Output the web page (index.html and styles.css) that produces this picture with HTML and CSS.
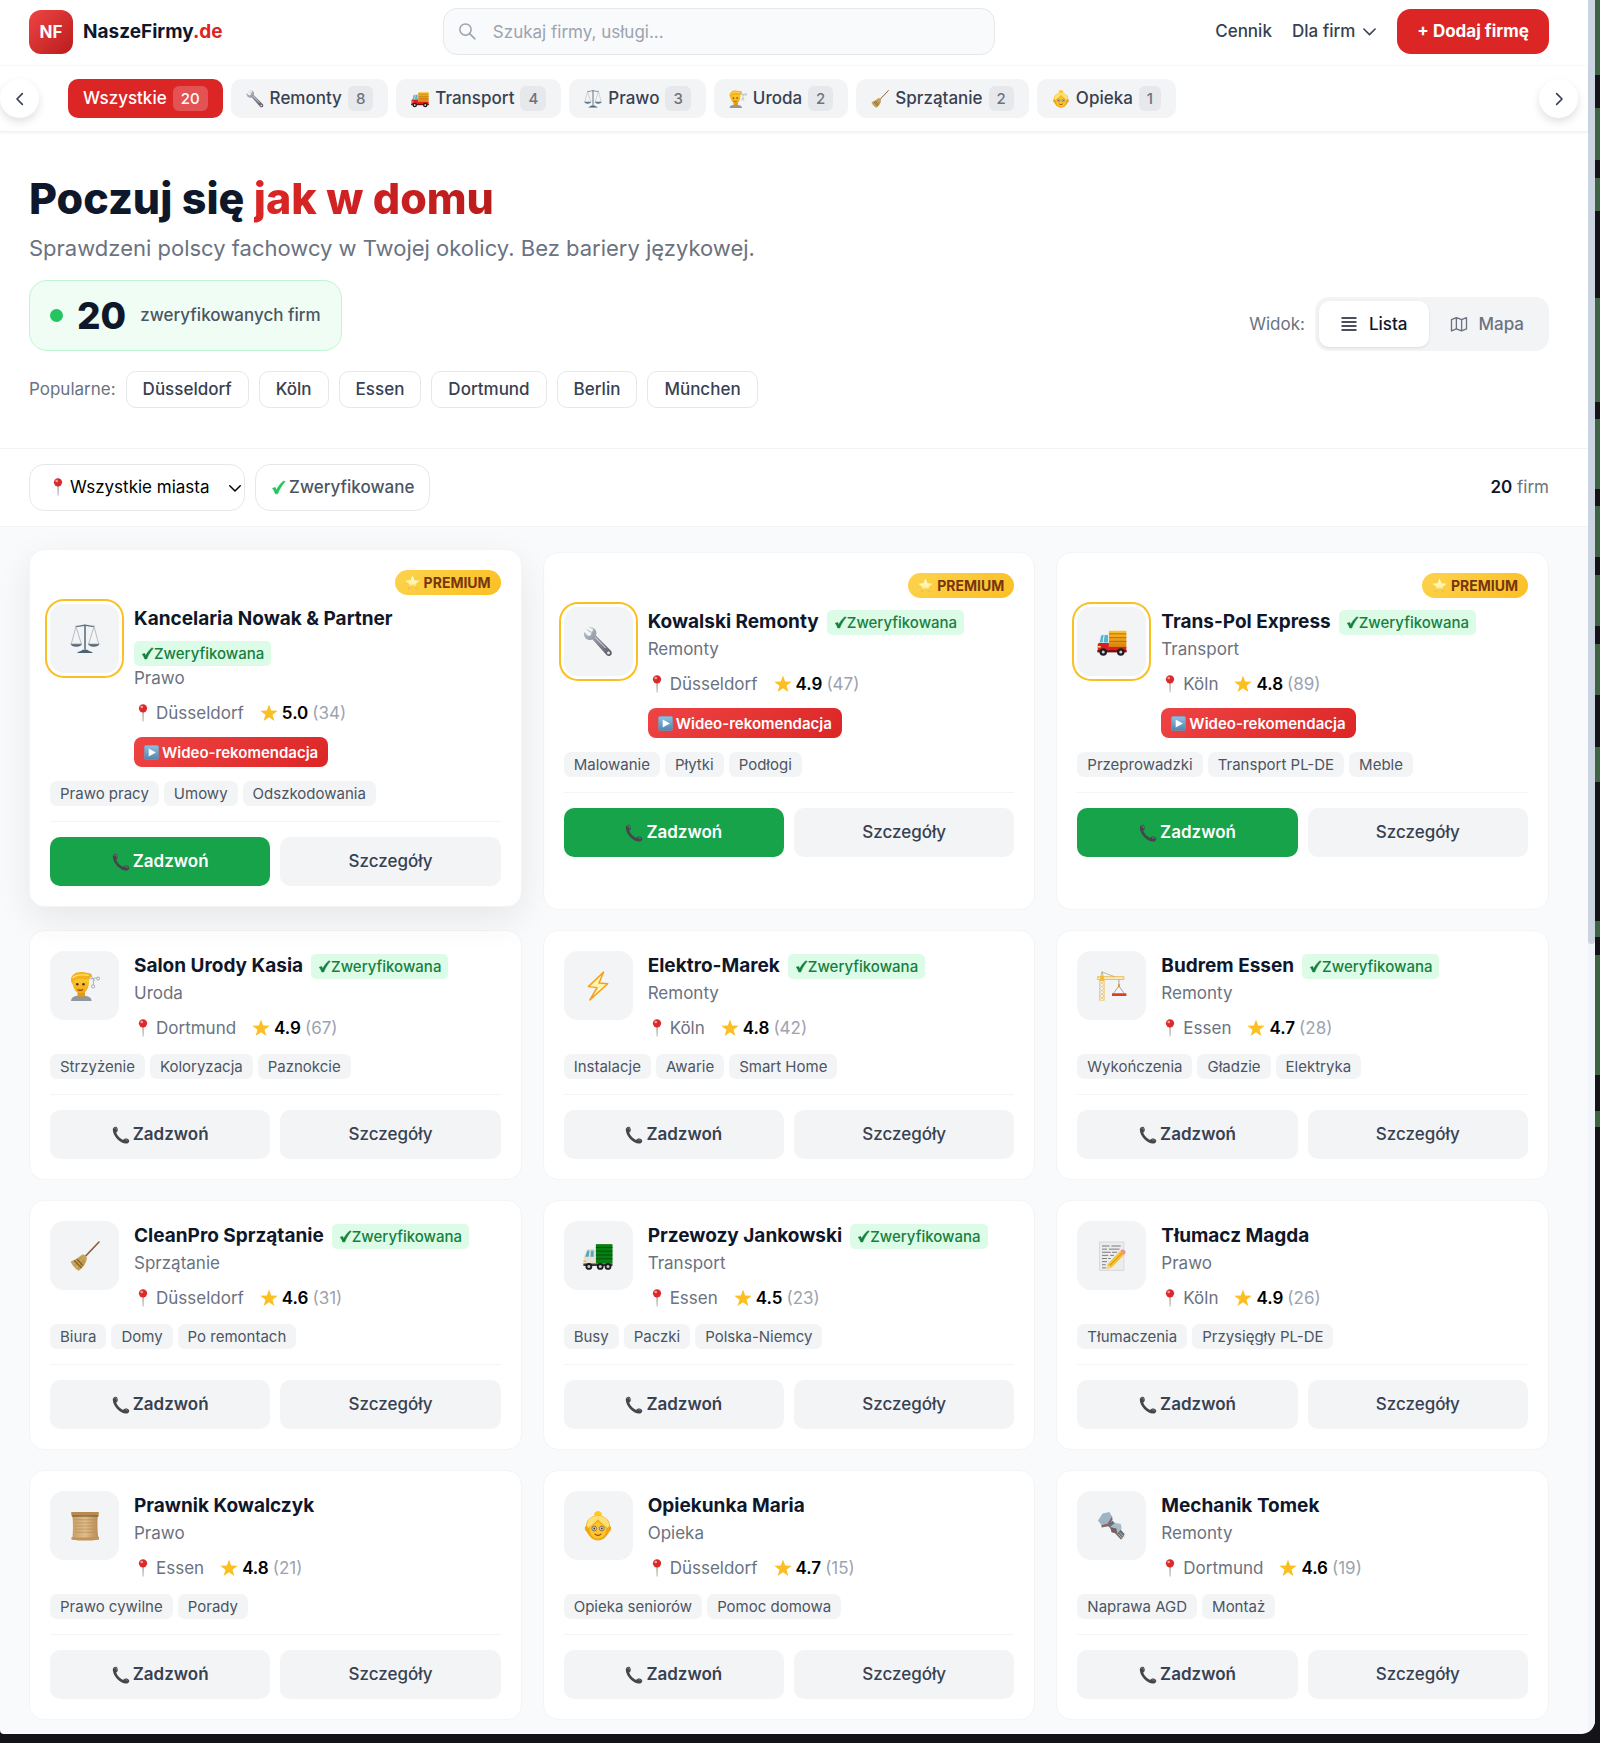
FILE: index.html
```html
<!DOCTYPE html>
<html lang="pl">
<head>
    <meta charset="UTF-8">
    <meta name="viewport" content="width=device-width, initial-scale=1.0">
    <title>NaszeFirmy.de</title>
    <link rel="stylesheet" href="styles.css">
</head>
<body>
    <!-- Icon sprite -->
    <svg class="sprite" aria-hidden="true">
        <defs>
            <linearGradient id="g-steel" x1="0" y1="0" x2="1" y2="1">
                <stop offset="0" stop-color="#b9c6cf"/>
                <stop offset="1" stop-color="#5b5560"/>
            </linearGradient>
            <linearGradient id="g-cargo" x1="0" y1="0" x2="0" y2="1">
                <stop offset="0" stop-color="#ffc02e"/>
                <stop offset="1" stop-color="#d97f06"/>
            </linearGradient>
            <linearGradient id="g-face" x1="0" y1="0" x2="0" y2="1">
                <stop offset="0" stop-color="#ffd83b"/>
                <stop offset="1" stop-color="#f2a516"/>
            </linearGradient>
            <linearGradient id="g-paper" x1="0" y1="0" x2="1" y2="0">
                <stop offset="0" stop-color="#c99e66"/>
                <stop offset=".5" stop-color="#dfbc8a"/>
                <stop offset="1" stop-color="#b98c54"/>
            </linearGradient>
            <linearGradient id="g-play" x1="0" y1="0" x2="0" y2="1">
                <stop offset="0" stop-color="#8fc0e4"/>
                <stop offset="1" stop-color="#4f84ae"/>
            </linearGradient>
            <linearGradient id="g-star" x1="0" y1="0" x2="0" y2="1">
                <stop offset="0" stop-color="#fffbe0"/>
                <stop offset=".6" stop-color="#fff3a0"/>
                <stop offset="1" stop-color="#f0a818"/>
            </linearGradient>
        </defs>
        <symbol id="i-wrench" viewBox="0 0 24 24">
            <path d="M2 1.2 5.6 4.4 7.6 3.6 8 1.3 4.6.6C7.2-.4 10.4 1.2 10.7 4.2c.1 1-.1 1.8-.4 2.5l11.9 12.1c1.1 1.1 1.1 2.7.1 3.7-1 .9-2.5.9-3.5-.2L7.600 10C4.700 11.200 1.300 9.300.800 6.300.600 5.500.700 4.600 1 3.900l3.100 3.200 2.200-.5L6.800 4z" fill="url(#g-steel)"/>
            <circle cx="20.4" cy="20.7" r="1.1" fill="#eee"/>
            <path d="M9.700 8.300 18 16.800" stroke="#dfe5e9" stroke-width=".8"/>
        </symbol>
        <symbol id="i-truck" viewBox="0 0 24 24">
            <path d="M9.500 3h14v13.500h-14z" fill="url(#g-cargo)"/>
            <path d="M9.500 5.500h14M9.500 8.500h14M9.500 11.500h14" stroke="#a9690c" stroke-width=".7"/>
            <path d="M1 15.500 2.600 7c.2-1 1-1.500 2-1.500h4.900v10z" fill="#e9eef0"/>
            <path d="M2.200 12.300 3.200 7.600c.2-.8.700-1.200 1.500-1.200h.6l-.9 5.900zM5.300 12.300l.8-5.900H8.800v5.900z" fill="#55b4d2"/>
            <path d="M.6 14.200c0-1 .6-1.500 1.500-1.500h7.400v3.300h14v4H.6z" fill="#db1e1e"/>
            <path d="M.3 18.500h23.300v1.800H.3z" fill="#7b0d0d"/>
            <circle cx="5" cy="20" r="3" fill="#1f1f23"/>
            <circle cx="19" cy="20" r="3" fill="#1f1f23"/>
            <circle cx="5" cy="20" r="1.2" fill="#ccd"/>
            <circle cx="19" cy="20" r="1.2" fill="#ccd"/>
            <path d="M.8 15.200h2.200v1.200H.8z" fill="#ffe27a"/>
        </symbol>
        <symbol id="i-lorry" viewBox="0 0 24 24">
            <path d="M10.300 2.500h13.300v15.500H10.300z" fill="#087f12"/>
            <path d="M10.300 5.200h13.300M10.300 8.200h13.300M10.300 11.200h13.300M10.300 14.200h13.300" stroke="#04530b" stroke-width=".8"/>
            <path d="M.6 19V13L2.600 7.500c.3-.8.900-1.200 1.800-1.200h5.200V19z" fill="#e8e1cf"/>
            <path d="M1.700 12.500 3.500 7.600h1.700l-.6 4.900zM6 12.500l.3-5h2.200v5z" fill="#4ea9cb"/>
            <path d="M.3 18h23.300v2H.3z" fill="#3a3a3d"/>
            <circle cx="4.7" cy="20.3" r="2.7" fill="#1c1c1f"/>
            <circle cx="13.8" cy="20.3" r="2.7" fill="#1c1c1f"/>
            <circle cx="20" cy="20.3" r="2.7" fill="#1c1c1f"/>
            <circle cx="4.7" cy="20.3" r="1.2" fill="#cbc7bb"/>
            <circle cx="13.8" cy="20.3" r="1.2" fill="#cbc7bb"/>
            <circle cx="20" cy="20.3" r="1.2" fill="#cbc7bb"/>
            <path d="M.4 15.500h2v1.200h-2z" fill="#f5b63c"/>
        </symbol>
        <symbol id="i-scales" viewBox="0 0 24 24">
            <path d="M4.500 1.800C8 2.400 10 .9 12 .9s4 1.500 7.500.9" fill="none" stroke="#5b7184" stroke-width="1"/>
            <path d="M12 .5v20" stroke="#54697b" stroke-width="1.2"/>
            <path d="M4.800 2 1 16M4.800 2l4.300 14M19.200 2 14.900 16M19.200 2 23 16" fill="none" stroke="#a5a8ab" stroke-width=".6"/>
            <path d="M.3 15.800h9.400c-.6 1.700-2.300 2.400-4.700 2.400s-4.100-.7-4.700-2.400zM14.300 15.800h9.400c-.6 1.700-2.300 2.400-4.700 2.400s-4.100-.7-4.700-2.400z" fill="#53697c"/>
            <path d="M1 15.800h8M15 15.800h8" stroke="#cbd5dc" stroke-width=".6"/>
            <path d="M5.800 23.200c.3-1.300 3-1 4.200-2.600h4c1.200 1.600 3.900 1.300 4.200 2.600z" fill="#4d6375"/>
        </symbol>
        <symbol id="i-haircut" viewBox="0 0 24 24">
            <path d="M.8 24c0-3.500 3-4.500 8-4.500s8.500 1.200 8.500 4.500z" fill="#93979b"/>
            <path d="M6 16h6v3.500c-1 1.500-5 1.500-6 0z" fill="#e29a12"/>
            <path d="M1.800 7c0-3 3-5 7-5s6.500 2.500 6.500 6c0 5-2.200 10-6.500 10s-7-5-7-11z" fill="url(#g-face)"/>
            <path d="M.8 8C.300 3.500 4 .800 8.800.800c4 0 5.700 1.200 8.700 1.500-.2 3.200-2.700 4.700-6.200 4.500C8 6.600 4.500 6.400 2.600 8.800L2 11z" fill="#f5b21c"/>
            <path d="M2 5.500C5 2.500 9 2.500 15 3.500" stroke="#ffe56b" fill="none"/>
            <circle cx="5.8" cy="10.5" r="1" fill="#4d3316"/>
            <circle cx="10.8" cy="10.5" r="1" fill="#4d3316"/>
            <path d="M6 14.800c1.500.9 3 .9 4.500 0" stroke="#a3470f" fill="none"/>
            <path d="M15 1.500 20 8M14.500 6.500 21.500 5.500M18.500 6 18.800 11" stroke="#a6abb0" stroke-width=".7"/>
            <circle cx="22.5" cy="6" r="1.2" fill="none" stroke="#999ea4" stroke-width=".7"/>
            <circle cx="18.5" cy="12.3" r="1.3" fill="none" stroke="#999ea4" stroke-width=".7"/>
        </symbol>
        <symbol id="i-broom" viewBox="0 0 24 24">
            <path d="M23.200.8 12.500 12" stroke="#8a5a3a" stroke-width="1.3" stroke-linecap="round"/>
            <path d="M9.800 10.800c1.700-.5 4 1.500 3.700 3.500-.8 4-3.500 7.500-6.500 9.400C4 22 1.300 19 .6 16.300 4 15.500 7 13 9.800 10.800z" fill="#c9a55a"/>
            <path d="M5.500 14.500 10.500 19.700M3.300 15.500l5.900 6" stroke="#7c5423" stroke-width="1"/>
            <path d="M9 13 4 19.500M11 14.500 6.500 22M12 16 8 22" stroke="#a17c36" stroke-width=".5"/>
        </symbol>
        <symbol id="i-granny" viewBox="0 0 24 24">
            <path d="M12 0c1.500 0 3.200 1.200 3.200 2.800S13.800 5 12 5 8.800 4.400 8.800 2.800 10.500 0 12 0z" fill="#ffca28"/>
            <path d="M12 3.500C6 3.500 2.600 7.500 2.400 12c-1.400.6-1.200 3.800.5 4.500 2 3.800 5.100 7 9.100 7s7.100-3.200 9.100-7c1.700-.7 1.900-3.900.5-4.500-.2-4.500-3.600-8.500-9.600-8.500z" fill="#f0a515"/>
            <path d="M12 3.700C6.500 3.700 3 7.500 3 12l1.500 1.500C6 12 9 10 12 6.500c3 3.500 6 5.500 7.500 7L21 12c0-4.500-3.500-8.300-9-8.300z" fill="#ffe173"/>
            <path d="M12 8c-2.500 3-5 4-6.800 5.500C5.300 18.500 8 22 12 22s6.700-3.500 6.800-8.500C17 12 14.500 11 12 8z" fill="#ffc62b"/>
            <circle cx="9" cy="14" r="1.9" fill="#cfe2ec" stroke="#756451" stroke-width=".7"/>
            <circle cx="15" cy="14" r="1.9" fill="#cfe2ec" stroke="#756451" stroke-width=".7"/>
            <circle cx="9" cy="14" r=".8" fill="#4d3316"/>
            <circle cx="15" cy="14" r=".8" fill="#4d3316"/>
            <path d="M9.300 18.300c1.700 1.500 3.700 1.500 5.400 0" stroke="#9c4310" fill="none"/>
        </symbol>
        <symbol id="i-pin" viewBox="0 0 24 24">
            <path d="M11.300 9h1.500l-.3 14.300h-.8z" fill="#8d8378"/>
            <circle cx="12" cy="5.8" r="5.5" fill="#dc2a2a"/>
            <circle cx="10.3" cy="4" r="1.8" fill="#f59b95"/>
        </symbol>
        <symbol id="i-star" viewBox="0 0 24 24">
            <path d="M12 .5l2.900 8.200 8.700.2-6.900 5.300 2.500 8.400L12 17.600l-7.200 5 2.500-8.400L.400 8.900l8.700-.2z" fill="#fbbf24"/>
        </symbol>
        <symbol id="i-glow-star" viewBox="0 0 24 24">
            <path d="M12 .8l3.300 7.700 8.200.6-6.300 5.400 2 8.300-7.200-4.400-7.200 4.400 2-8.300L.500 9.100l8.200-.6z" fill="url(#g-star)"/>
        </symbol>
        <symbol id="i-play" viewBox="0 0 24 24">
            <rect x=".5" y=".5" width="23" height="23" rx="3" fill="url(#g-play)" stroke="#7c98ad"/>
            <path d="M7.500 5.500v13L19 12z" fill="#fff"/>
        </symbol>
        <symbol id="i-phone" viewBox="0 0 24 24">
            <path d="M1.200 3.500C2 1.500 4.500.300 6 1.300c1.600 1.200 2.100 4.200 1.300 5.700-.6 1-1.700 1-1.500 2 .7 3.500 5.200 8 8.700 9.200 1 .3 1.500-.9 2.500-1.300 2-.7 5 .3 5.800 2 .8 1.800-.8 4-2.900 4.400C11.500 24.700-.300 12 1.200 3.500z" fill="#45454a"/>
            <path d="M3 3.500c.7-1 2-1.300 2.600-.6.7.8.900 2 .6 2.900M17.500 18.500c1.500-.4 3.200.2 3.700 1.200" fill="none" stroke="#8b8b91" stroke-width="1"/>
        </symbol>
        <symbol id="i-bolt" viewBox="0 0 24 24">
            <path d="M16.500.8 4.300 12.500l7 .8L5.500 23.200l14.300-13-7-.6z" fill="#fff4b0" stroke="#f59e1b" stroke-width="1.2" stroke-linejoin="round"/>
        </symbol>
        <symbol id="i-crane" viewBox="0 0 24 24">
            <path d="M2 7h3.800v16.500H2z" fill="none" stroke="#efcd7d" stroke-width=".7"/>
            <path d="M2 8l3.800 3L2 14l3.800 3L2 20l3.800 3M5.800 8 2 11l3.800 3L2 17l3.800 3L2 23" fill="none" stroke="#e9bd5a" stroke-width=".6"/>
            <path d="M.5 4.500h21v2.300H.5z" fill="#f9e8bc" stroke="#e7b03a" stroke-width=".6"/>
            <path d="M3 4.500 4 .5l1 4M4 .8 14 4.500" fill="none" stroke="#b3a27c" stroke-width=".6"/>
            <path d="M2.500 4h3v4h-3z" fill="#f2b93b"/>
            <path d="M17.500 7v5l-4 5.500m4-5.500 4 5.500" fill="none" stroke="#868a8e" stroke-width=".6"/>
            <path d="M16.800 10.500h1.500v2.500h-1.500z" fill="#d29b2c"/>
            <path d="M12 17.800h11.500v2.200H12z" fill="#d9401f"/>
        </symbol>
        <symbol id="i-memo" viewBox="0 0 24 24">
            <path d="M2 .8h19.500v22.700H2z" fill="#ececec" stroke="#d2d2d2" stroke-width=".6"/>
            <path d="M4 4h6m1.500 0H19M4 6.500h4m1.500 0H18M4 9h7m1 0h4M4 11.500h5m1.500 0h3M4 14h4m1 0h2M4 16.500h4M4 19h3M4 21.500h3" stroke="#7b7b7b" stroke-width=".8"/>
            <path d="M8.500 18.500 18.500 8l3.200 3L11.500 21.300l-4.200 1.200z" fill="#f8c22a"/>
            <path d="M10 19.800 20.300 9.500" stroke="#c98a10" stroke-width=".8"/>
            <path d="M18.500 8c1-1.200 2.200-1.700 3.500-.7 1.200 1.100 1 2.600-.3 3.700z" fill="#ee8d92"/>
            <path d="m8.500 18.500-1.200 4 4.200-1.200z" fill="#ecd3a4"/>
        </symbol>
        <symbol id="i-scroll" viewBox="0 0 24 24">
            <path d="M1.800 2.500h20.500c-.5 6-.5 12.500.2 19H2c.5-7 .5-13-.2-19z" fill="url(#g-paper)"/>
            <path d="M4 7h16M4 9.500h16M4 12h16M4 14.500h16M4 17h16" stroke="#b08a58" stroke-width=".5"/>
            <path d="M1 .8h22v2.700H1z" fill="#b98a50"/>
            <path d="M1.500 3.500h21.300v1H1.500z" fill="#7d5a31"/>
            <path d="M1.200 20.800c8 .8 14 .3 22-.3v2.500c-8 .9-14 .9-22 0z" fill="#c1935a"/>
        </symbol>
        <symbol id="i-nut" viewBox="0 0 24 24">
            <path d="M.8 7.500 4.500 2l5.300-1.300L12 4.200 8.300 10 3.500 11.200z" fill="#9db4c4"/>
            <path d="M8.300 10 12 4.200l.5 2.300-3.200 5.700-5.600 1L3.500 11.200z" fill="#86686a"/>
            <path d="m8.500 11.500 3.800-4 9.900 11-2.900 4.500z" fill="#66717b"/>
            <path d="m10.500 12.800 4-3.500 4.500 1 .8 3.700-3.600 4-4.500-1z" fill="#a9bdc9"/>
            <path d="m10.500 12.800 5 1.200.7 4-4.500-1z" fill="#7a5d60"/>
            <path d="M18 17.500 22 21m-5-2.500 3.300 3.500" stroke="#c8a98a" stroke-width=".8"/>
        </symbol>
        <symbol id="i-check" viewBox="0 0 24 24">
            <path d="M2.500 13.300 6.800 12l2 4.500C11.500 10.500 15.500 5 20 1.800l2.500.7C17.500 8 13.500 14.500 10.500 22H7C6 18.500 4.500 15.800 2.500 13.300z" fill="currentColor" stroke="currentColor" stroke-width="1.2" stroke-linejoin="round"/>
        </symbol>
        <symbol id="i-search" viewBox="0 0 24 24">
            <circle cx="10" cy="10" r="7.5" fill="none" stroke="currentColor" stroke-width="2"/>
            <path d="m15.500 15.500 7 7" stroke="currentColor" stroke-width="2" stroke-linecap="round"/>
        </symbol>
        <symbol id="i-down" viewBox="0 0 24 24">
            <path d="m3 8 9 9 9-9" fill="none" stroke="currentColor" stroke-width="2.5" stroke-linecap="round" stroke-linejoin="round"/>
        </symbol>
        <symbol id="i-left" viewBox="0 0 24 24">
            <path d="m15.500 4-8 8 8 8" fill="none" stroke="currentColor" stroke-width="2.5" stroke-linecap="round" stroke-linejoin="round"/>
        </symbol>
        <symbol id="i-right" viewBox="0 0 24 24">
            <path d="m8.500 4 8 8-8 8" fill="none" stroke="currentColor" stroke-width="2.5" stroke-linecap="round" stroke-linejoin="round"/>
        </symbol>
        <symbol id="i-list" viewBox="0 0 24 24">
            <path d="M2 4h20M2 9.300h20M2 14.700h20M2 20h20" stroke="currentColor" stroke-width="2.2"/>
        </symbol>
        <symbol id="i-map" viewBox="0 0 24 24">
            <path d="M8.500 3.500 2 6.300v15l6.500-2.800 7 2.800 6.500-2.800v-15l-6.500 2.800zM8.500 3.500v15M15.500 6.300v15" fill="none" stroke="currentColor" stroke-width="1.8" stroke-linejoin="round"/>
        </symbol>
    </svg>

    <div class="window">
        <div class="page">
            <header class="header">
                <a class="logo" href="#">
                    <span class="logo-mark">NF</span>
                    <span class="logo-name">NaszeFirmy<span class="accent">.de</span></span>
                </a>
                <label class="search">
                    <svg class="icon-search"><use href="#i-search"/></svg>
                    <input type="search" placeholder="Szukaj firmy, usługi..." aria-label="Szukaj firmy, usługi">
                </label>
                <nav class="menu">
                    <a class="menu-link" href="#">Cennik</a>
                    <a class="menu-link" href="#">Dla firm <svg class="icon-menu"><use href="#i-down"/></svg></a>
                    <button class="add-button" type="button">+ Dodaj firmę</button>
                </nav>
            </header>

            <nav class="categories">
                <button class="arrow arrow-left" type="button" aria-label="Poprzednie"><svg><use href="#i-left"/></svg></button>
                <button class="category active" type="button">Wszystkie <span class="count">20</span></button>
                <button class="category" type="button"><svg><use href="#i-wrench"/></svg>Remonty <span class="count">8</span></button>
                <button class="category" type="button"><svg><use href="#i-truck"/></svg>Transport <span class="count">4</span></button>
                <button class="category" type="button"><svg><use href="#i-scales"/></svg>Prawo <span class="count">3</span></button>
                <button class="category" type="button"><svg><use href="#i-haircut"/></svg>Uroda <span class="count">2</span></button>
                <button class="category" type="button"><svg><use href="#i-broom"/></svg>Sprzątanie <span class="count">2</span></button>
                <button class="category" type="button"><svg><use href="#i-granny"/></svg>Opieka <span class="count">1</span></button>
                <button class="arrow arrow-right" type="button" aria-label="Następne"><svg><use href="#i-right"/></svg></button>
            </nav>

            <section class="hero">
                <h1>Poczuj się <span class="hero-accent">jak w domu</span></h1>
                <p class="subtitle">Sprawdzeni polscy fachowcy w Twojej okolicy. Bez bariery językowej.</p>
                <div class="hero-row">
                    <div class="stat">
                        <span class="dot"></span>
                        <strong>20</strong>
                        <span>zweryfikowanych firm</span>
                    </div>
                    <div class="view">
                        <span>Widok:</span>
                        <div class="toggle">
                            <button class="active" type="button"><svg><use href="#i-list"/></svg>Lista</button>
                            <button type="button"><svg><use href="#i-map"/></svg>Mapa</button>
                        </div>
                    </div>
                </div>
                <div class="popular">
                    <span>Popularne:</span>
                    <button type="button">Düsseldorf</button>
                    <button type="button">Köln</button>
                    <button type="button">Essen</button>
                    <button type="button">Dortmund</button>
                    <button type="button">Berlin</button>
                    <button type="button">München</button>
                </div>
            </section>

            <section class="filters">
                <label class="city-filter">
                    <svg class="icon-pin"><use href="#i-pin"/></svg>
                    <select id="city" aria-label="Miasto">
                        <option value="">Wszystkie miasta</option>
                        <option>Düsseldorf</option>
                        <option>Köln</option>
                        <option>Essen</option>
                        <option>Dortmund</option>
                    </select>
                    <svg class="icon-caret"><use href="#i-down"/></svg>
                </label>
                <button class="verified-filter" id="verified" type="button"><svg><use href="#i-check"/></svg>Zweryfikowane</button>
                <p class="total"><strong id="total">20</strong> firm</p>
            </section>

            <main class="cards" id="cards"></main>
        </div>
        <div class="scrollbar"><div class="thumb"></div></div>
    </div>

    <script src="script.js"></script>
</body>
</html>
```
FILE: styles.css
```css
* {
    box-sizing: border-box;
}

body {
    margin: 0;
    padding: 0 5px 9px 0;
    background-color: #141317;
    /* desktop showing behind the window */
    background-image: linear-gradient(#3f6243 75px, transparent 75px 108px, #3f6243 108px 160px, transparent 160px 178px, #3f6243 178px 211px, transparent 211px 298px, #3f6243 298px 402px, transparent 402px 419px, #3f6243 419px 489px, transparent 489px 506px, #3f6243 506px 557px, transparent 557px 575px, #3f6243 575px 626px, transparent 626px 644px, #3f6243 644px 695px, transparent 695px 747px, #3f6243 747px 782px, transparent 782px 921px, #3f6243 921px 937px, transparent 937px 955px, #3f6243 955px 1075px, transparent 1075px 1111px, #3f6243 1111px 1127px, transparent 1127px);
    color: #0f172a;
    font-family: Inter, "Open Sans", sans-serif;
    font-size: 17px;
    line-height: 25px;
}

button,
input,
select {
    font: inherit;
    color: inherit;
}

button {
    border: none;
    cursor: pointer;
}

a {
    color: inherit;
    text-decoration: none;
}

h1,
h2,
p {
    margin: 0;
}

svg {
    flex: none;
    width: 18px;
    height: 18px;
}

.sprite {
    position: absolute;
    width: 0;
    height: 0;
}

.window {
    display: flex;
    overflow: hidden;
    background: #f9fafc;
    border-radius: 0 0 14px 4px;
}

.page {
    flex: 1;
    min-width: 0;
}

.scrollbar {
    width: 7px;
    background: #f1f5f9;
}

.thumb {
    height: 944px;
    background: #cbd5e1;
    border-radius: 0 0 4px 4px;
}

/* Header */
.header {
    display: flex;
    align-items: center;
    justify-content: space-between;
    gap: 20px;
    padding: 8px 39px 10px 29px;
    background: #fff;
    border-bottom: 1px solid #f8f9fb;
}

.logo {
    display: flex;
    align-items: center;
    gap: 10px;
}

.logo-mark {
    width: 44px;
    height: 44px;
    border-radius: 12px;
    background: linear-gradient(135deg, #ef4444, #b91c1c);
    color: #fff;
    font-size: 17px;
    font-weight: 700;
    line-height: 44px;
    text-align: center;
}

.logo-name {
    font-size: 19px;
    font-weight: 700;
}

.accent {
    color: #dc2626;
}

.search {
    position: relative;
    flex: 0 1 552px;
}

.search input {
    display: block;
    width: 100%;
    height: 47px;
    padding: 0 20px 0 49px;
    border: 1px solid #e5e7eb;
    border-radius: 14px;
    background: #f9fafb;
}

.search input::placeholder {
    color: #9ca3af;
}

.icon-search {
    position: absolute;
    top: 14px;
    left: 15px;
    color: #9ca3af;
}

.menu {
    display: flex;
    align-items: center;
    gap: 20px;
    color: #374151;
    font-weight: 500;
}

.menu-link {
    display: flex;
    align-items: center;
    gap: 7px;
}

.icon-menu {
    width: 15px;
    height: 15px;
}

.add-button {
    height: 45px;
    padding: 0 20px;
    border-radius: 14px;
    background: #dc2626;
    color: #fff;
    font-weight: 700;
}

/* Category strip */
.categories {
    position: relative;
    display: flex;
    gap: 8px;
    padding: 13px 68px;
    background: #fff;
    border-bottom: 1px solid #f0f1f3;
    box-shadow: 0 1px 3px rgba(0, 0, 0, 0.06);
}

.category {
    display: flex;
    align-items: center;
    gap: 6px;
    height: 39px;
    padding: 0 15px;
    border-radius: 10px;
    background: #f3f4f6;
    color: #374151;
    font-weight: 500;
}

.category.active {
    background: #dc2626;
    color: #fff;
}

.count {
    padding: 0 8px;
    border-radius: 6px;
    background: #e6e8ec;
    color: #6b7280;
    font-size: 15px;
}

.category.active .count {
    background: #e45353;
    color: #fff;
}

.arrow {
    position: absolute;
    top: 13px;
    display: flex;
    align-items: center;
    justify-content: center;
    width: 39px;
    height: 39px;
    padding: 0;
    border-radius: 50%;
    background: #fff;
    color: #374151;
    box-shadow: 0 4px 8px rgba(0, 0, 0, 0.12);
}

.arrow svg {
    width: 16px;
    height: 16px;
}

.arrow-left {
    left: 0;
}

.arrow-right {
    right: 10px;
}

/* Hero */
.hero {
    padding: 38px 39px 40px 29px;
    background: #fff;
    border-bottom: 1px solid #f1f3f5;
}

.hero h1 {
    font-size: 43px;
    font-weight: 800;
    line-height: 56px;
}

.hero-accent {
    background: linear-gradient(90deg, #dc2626, #b91c1c);
    background-clip: text;
    color: transparent;
}

.subtitle {
    margin-top: 4px;
    color: #6b7280;
    font-size: 22px;
    line-height: 36px;
}

.hero-row {
    display: flex;
    align-items: flex-end;
    justify-content: space-between;
    margin-top: 14px;
}

.stat {
    display: flex;
    align-items: center;
    gap: 14px;
    height: 71px;
    padding: 0 20px;
    border: 1px solid #bbf7d0;
    border-radius: 18px;
    background: #f0fdf4;
    color: #4b5563;
    font-weight: 500;
}

.stat strong {
    color: #0f172a;
    font-size: 37px;
    font-weight: 800;
}

.dot {
    width: 13px;
    height: 13px;
    border-radius: 50%;
    background: #22c55e;
}

.view {
    display: flex;
    align-items: center;
    gap: 10px;
    color: #6b7280;
}

.toggle {
    display: flex;
    padding: 4px;
    border-radius: 14px;
    background: #f3f4f6;
}

.toggle button {
    display: flex;
    align-items: center;
    gap: 11px;
    height: 46px;
    padding: 0 21px;
    border-radius: 10px;
    background: none;
    color: #6b7280;
    font-weight: 500;
}

.toggle button.active {
    background: #fff;
    color: #0f172a;
    box-shadow: 0 1px 3px rgba(0, 0, 0, 0.1);
}

.popular {
    display: flex;
    align-items: center;
    gap: 10px;
    margin-top: 20px;
    color: #6b7280;
}

.popular button {
    height: 37px;
    padding: 0 16px;
    border: 1px solid #e5e7eb;
    border-radius: 10px;
    background: #fff;
    color: #374151;
    font-weight: 500;
}

/* Filters */
.filters {
    display: flex;
    align-items: center;
    gap: 10px;
    padding: 15px 39px 15px 29px;
    background: #fff;
    border-bottom: 1px solid #f1f3f5;
}

.city-filter {
    position: relative;
}

.city-filter select {
    width: 216px;
    height: 47px;
    padding: 0 34px 0 40px;
    border: 1px solid #e5e7eb;
    border-radius: 15px;
    background: #fff;
    color: #000;
    appearance: none;
}

.icon-pin {
    position: absolute;
    top: 14px;
    left: 20px;
}

.icon-caret {
    position: absolute;
    top: 17px;
    right: 3px;
    width: 14px;
    height: 14px;
    color: #000;
    pointer-events: none;
}

.verified-filter {
    display: flex;
    align-items: center;
    gap: 3px;
    height: 47px;
    padding: 0 15px;
    border: 1px solid #e5e7eb;
    border-radius: 15px;
    background: #fff;
    color: #4b5563;
    font-weight: 500;
}

.verified-filter svg {
    width: 15px;
    height: 15px;
    color: #22c55e;
}

.total {
    margin-left: auto;
    color: #6b7280;
}

.total strong {
    color: #0f172a;
    font-weight: 600;
}

/* Cards */
.cards {
    display: grid;
    grid-template-columns: repeat(3, 1fr);
    gap: 20px 21px;
    padding: 25px 39px 14px 29px;
}

.card {
    padding: 20px;
    border: 1px solid #f3f4f6;
    border-radius: 15px;
    background: #fff;
}

.card.hovered {
    transform: translateY(-3px);
    box-shadow: 0 12px 36px rgba(0, 0, 0, 0.08);
}

.premium {
    display: flex;
    align-items: center;
    gap: 4px;
    width: fit-content;
    height: 25px;
    margin: 0 0 9px auto;
    padding: 0 10px;
    border-radius: 13px;
    background: linear-gradient(135deg, #fcd34d, #fbbf24);
    color: #78350f;
    font-size: 14px;
    font-weight: 700;
}

.premium svg {
    width: 15px;
    height: 15px;
}

.top {
    display: flex;
    align-items: flex-start;
    gap: 15px;
}

.avatar {
    display: flex;
    flex: none;
    align-items: center;
    justify-content: center;
    width: 69px;
    height: 69px;
    border-radius: 14px;
    background: #f3f4f6;
}

.avatar svg {
    width: 30px;
    height: 30px;
}

.card.is-premium .avatar {
    box-shadow: 0 0 0 3px #fff, 0 0 0 5px #fbbf24;
}

.name-row {
    display: flex;
    flex-wrap: wrap;
    align-items: center;
    gap: 7px 8px;
}

.name-row h2 {
    font-size: 19px;
    font-weight: 700;
    line-height: 30px;
}

.badge {
    display: flex;
    align-items: center;
    height: 25px;
    padding: 0 7px;
    border-radius: 5px;
    background: #dcfce7;
    color: #15803d;
    font-size: 15px;
    font-weight: 500;
}

.badge svg {
    width: 13px;
    height: 13px;
}

.kind {
    color: #6b7280;
}

.meta {
    display: flex;
    align-items: center;
    gap: 4px;
    height: 24px;
    margin-top: 10px;
    color: #6b7280;
}

.meta strong {
    color: #000;
    font-weight: 600;
}

.meta .icon-rating {
    margin-left: 12px;
}

.meta .reviews {
    color: #9ca3af;
}

.video {
    display: flex;
    align-items: center;
    gap: 3px;
    width: fit-content;
    height: 30px;
    margin-top: 12px;
    padding: 0 10px;
    border-radius: 8px;
    background: linear-gradient(135deg, #ef4444, #dc2626);
    color: #fff;
    font-size: 15px;
    font-weight: 600;
}

.video svg {
    width: 15px;
    height: 15px;
}

.tags {
    display: flex;
    gap: 5px;
    margin-top: 14px;
}

.tag {
    height: 25px;
    padding: 0 10px;
    border-radius: 7px;
    background: #f3f4f6;
    color: #4b5563;
    font-size: 15px;
}

.actions {
    display: grid;
    grid-template-columns: 1fr 1fr;
    gap: 10px;
    margin-top: 15px;
    padding-top: 15px;
    border-top: 1px solid #f3f4f6;
}

.actions button {
    display: flex;
    align-items: center;
    justify-content: center;
    gap: 3px;
    height: 49px;
    border-radius: 10px;
    background: #f3f4f6;
    color: #374151;
    font-weight: 500;
}

.actions .call {
    font-weight: 600;
}

.card.is-premium .call {
    background: #16a34a;
    color: #fff;
}
```
FILE: script.js
```javascript
const companies = [
    { name: 'Kancelaria Nowak & Partner', icon: 'scales', kind: 'Prawo', city: 'Düsseldorf', rating: '5.0', reviews: 34, tags: ['Prawo pracy', 'Umowy', 'Odszkodowania'], verified: true, premium: true, hovered: true },
    { name: 'Kowalski Remonty', icon: 'wrench', kind: 'Remonty', city: 'Düsseldorf', rating: '4.9', reviews: 47, tags: ['Malowanie', 'Płytki', 'Podłogi'], verified: true, premium: true },
    { name: 'Trans-Pol Express', icon: 'truck', kind: 'Transport', city: 'Köln', rating: '4.8', reviews: 89, tags: ['Przeprowadzki', 'Transport PL-DE', 'Meble'], verified: true, premium: true },
    { name: 'Salon Urody Kasia', icon: 'haircut', kind: 'Uroda', city: 'Dortmund', rating: '4.9', reviews: 67, tags: ['Strzyżenie', 'Koloryzacja', 'Paznokcie'], verified: true },
    { name: 'Elektro-Marek', icon: 'bolt', kind: 'Remonty', city: 'Köln', rating: '4.8', reviews: 42, tags: ['Instalacje', 'Awarie', 'Smart Home'], verified: true },
    { name: 'Budrem Essen', icon: 'crane', kind: 'Remonty', city: 'Essen', rating: '4.7', reviews: 28, tags: ['Wykończenia', 'Gładzie', 'Elektryka'], verified: true },
    { name: 'CleanPro Sprzątanie', icon: 'broom', kind: 'Sprzątanie', city: 'Düsseldorf', rating: '4.6', reviews: 31, tags: ['Biura', 'Domy', 'Po remontach'], verified: true },
    { name: 'Przewozy Jankowski', icon: 'lorry', kind: 'Transport', city: 'Essen', rating: '4.5', reviews: 23, tags: ['Busy', 'Paczki', 'Polska-Niemcy'], verified: true },
    { name: 'Tłumacz Magda', icon: 'memo', kind: 'Prawo', city: 'Köln', rating: '4.9', reviews: 26, tags: ['Tłumaczenia', 'Przysięgły PL-DE'] },
    { name: 'Prawnik Kowalczyk', icon: 'scroll', kind: 'Prawo', city: 'Essen', rating: '4.8', reviews: 21, tags: ['Prawo cywilne', 'Porady'] },
    { name: 'Opiekunka Maria', icon: 'granny', kind: 'Opieka', city: 'Düsseldorf', rating: '4.7', reviews: 15, tags: ['Opieka seniorów', 'Pomoc domowa'] },
    { name: 'Mechanik Tomek', icon: 'nut', kind: 'Remonty', city: 'Dortmund', rating: '4.6', reviews: 19, tags: ['Naprawa AGD', 'Montaż'] }
];

const cards = document.getElementById('cards');
const city = document.getElementById('city');
const verified = document.getElementById('verified');
const total = document.getElementById('total');

let onlyVerified = false;

function icon(name, className = '') {
    return `<svg class="${className}"><use href="#i-${name}"/></svg>`;
}

function cardHtml(c) {
    const classes = ['card', c.premium ? 'is-premium' : '', c.hovered ? 'hovered' : ''].join(' ').trim();
    return `
        <article class="${classes}">
            ${c.premium ? `<div class="premium">${icon('glow-star')}PREMIUM</div>` : ''}
            <div class="top">
                <div class="avatar">${icon(c.icon)}</div>
                <div class="info">
                    <div class="name-row">
                        <h2>${c.name.replace('&', '&amp;')}</h2>
                        ${c.verified ? `<span class="badge">${icon('check')}Zweryfikowana</span>` : ''}
                    </div>
                    <p class="kind">${c.kind}</p>
                    <div class="meta">
                        ${icon('pin')}<span>${c.city}</span>
                        ${icon('star', 'icon-rating')}<strong>${c.rating}</strong>
                        <span class="reviews">(${c.reviews})</span>
                    </div>
                    ${c.premium ? `<div class="video">${icon('play')}Wideo-rekomendacja</div>` : ''}
                </div>
            </div>
            <div class="tags">${c.tags.map(t => `<span class="tag">${t}</span>`).join('')}</div>
            <div class="actions">
                <button class="call" type="button">${icon('phone')}Zadzwoń</button>
                <button type="button">Szczegóły</button>
            </div>
        </article>`;
}

function render() {
    const list = companies.filter(c => (!city.value || c.city === city.value) && (!onlyVerified || c.verified));
    cards.innerHTML = list.map(cardHtml).join('');
    return list.length;
}

city.addEventListener('change', () => {
    total.textContent = render();
});

verified.addEventListener('click', () => {
    onlyVerified = !onlyVerified;
    total.textContent = render();
});

render();
```
